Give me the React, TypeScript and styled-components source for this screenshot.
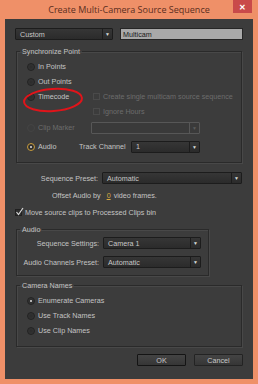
import styled, { createGlobalStyle } from "styled-components";

const GlobalStyle = createGlobalStyle`
  html, body {
    margin: 0;
    padding: 0;
    background: #ffffff;
  }
`;

export const Window = styled.div`
  display: flex;
  flex-direction: column;
  width: 258px;
  height: 384px;
  box-sizing: border-box;
  padding: 0 5px 5px 5px;
  background-color: #ef9068;
  font-family: "Liberation Sans", Arial, sans-serif;
`;

export const TitleBar = styled.div`
  display: flex;
  justify-content: center;
  align-items: center;
  position: relative;
  height: 19px;
  font-family: "Open Sans", sans-serif;
  font-size: 9px;
  color: #5a2e1e;
`;

export const CloseBtn = styled.div`
  position: absolute;
  top: 0;
  right: 1px;
  display: flex;
  justify-content: center;
  align-items: center;
  width: 19px;
  height: 13px;
  background-color: #c94a4a;
  color: #ffffff;
  font-size: 8px;
  font-weight: bold;
`;

export const Body = styled.div`
  display: flex;
  flex-direction: column;
  flex: 1;
  padding: 9px 10px 0 10px;
  background-color: #3c3c3c;
  color: #c4c4c4;
  font-size: 7.2px;
`;

export const Row = styled.div<{ $h?: number; $pl?: number; $mt?: number }>`
  display: flex;
  align-items: center;
  height: ${(p) => p.$h ?? 15}px;
  padding-left: ${(p) => p.$pl ?? 0}px;
  margin-top: ${(p) => p.$mt ?? 0}px;
  white-space: nowrap;
`;

export const Lead = styled.div<{ $w: number }>`
  display: flex;
  align-items: center;
  flex: 0 0 ${(p) => p.$w}px;
  width: ${(p) => p.$w}px;
`;

export const Select = styled.div<{ $w: number; $disabled?: boolean }>`
  display: flex;
  align-items: center;
  flex: 0 0 ${(p) => p.$w}px;
  box-sizing: border-box;
  width: ${(p) => p.$w}px;
  height: 12px;
  border: 1px solid ${(p) => (p.$disabled ? "#575757" : "#1c1c1c")};
  border-radius: 1px;
  background: ${(p) =>
    p.$disabled ? "#3a3a3a" : "linear-gradient(#363636, #2b2b2b)"};
  color: #c8c8c8;

  > .val {
    flex: 1;
    padding-left: 4px;
  }

  > .arrow {
    display: flex;
    justify-content: center;
    align-items: center;
    width: 9px;
    height: 100%;
    border-left: 1px solid ${(p) => (p.$disabled ? "#575757" : "#1c1c1c")};
    color: ${(p) => (p.$disabled ? "#5c5c5c" : "#d8d8d8")};
    font-size: 5px;
  }
`;

export const TextInput = styled.div`
  display: flex;
  align-items: center;
  box-sizing: border-box;
  flex: 1;
  height: 12px;
  margin-left: 7px;
  padding-left: 2px;
  border: 1px solid #262626;
  background-color: #a9a9a9;
  color: #1a1a1a;
`;

export const Group = styled.fieldset<{ $w: number; $mt: number; $pb: number }>`
  width: ${(p) => p.$w}px;
  box-sizing: border-box;
  margin: ${(p) => p.$mt}px 0 0 1px;
  padding: 0 0 ${(p) => p.$pb}px 0;
  border: 1px solid #2a2a2a;
  box-shadow: 1px 1px 0 #484848, inset 1px 1px 0 #484848;
  min-width: 0;

  > legend {
    margin-left: 3px;
    padding: 0 2px;
    line-height: 9px;
    color: #c4c4c4;
  }
`;

export const Radio = styled.span<{ $on?: boolean; $accent?: boolean; $disabled?: boolean }>`
  position: relative;
  display: inline-block;
  flex: 0 0 8px;
  box-sizing: border-box;
  width: 8px;
  height: 8px;
  margin-right: 3px;
  border-radius: 50%;
  border: 1px solid ${(p) => (p.$accent ? "#c69a3a" : p.$disabled ? "#444" : "#222")};
  background: ${(p) => (p.$disabled ? "#3c3c3c" : "radial-gradient(#2b2b2b, #363636)")};

  &::after {
    content: "";
    display: ${(p) => (p.$on ? "block" : "none")};
    position: absolute;
    left: 2px;
    top: 2px;
    width: 2px;
    height: 2px;
    border-radius: 50%;
    background: #e0e0e0;
  }
`;

export const Check = styled.span<{ $on?: boolean; $disabled?: boolean }>`
  position: relative;
  display: inline-block;
  flex: 0 0 7px;
  box-sizing: border-box;
  width: 7px;
  height: 7px;
  margin-right: 3px;
  border: 1px solid ${(p) => (p.$disabled ? "#4a4a4a" : "#202020")};
  background: ${(p) => (p.$disabled ? "#3c3c3c" : "#2e2e2e")};

  > svg {
    position: absolute;
    left: -1px;
    top: -3px;
  }
`;

export const Label = styled.span<{ $disabled?: boolean; $w?: number; $right?: boolean }>`
  display: inline-block;
  color: ${(p) => (p.$disabled ? "#6c6c6c" : "#c4c4c4")};
  ${(p) => (p.$w ? `flex: 0 0 ${p.$w}px; width: ${p.$w}px; box-sizing: border-box;` : "")}
  ${(p) => (p.$right ? "text-align: right; padding-right: 4px;" : "")}
`;

export const Underlined = styled.span`
  margin: 0 3px 0 6px;
  color: #d6a840;
  text-decoration: underline;
`;

export const Footer = styled.div`
  display: flex;
  justify-content: flex-end;
  column-gap: 8px;
  margin-top: 7px;
`;

export const Button = styled.div<{ $focus?: boolean }>`
  display: flex;
  justify-content: center;
  align-items: center;
  box-sizing: border-box;
  width: 49px;
  height: 12px;
  border: 1px solid ${(p) => (p.$focus ? "#141414" : "#232323")};
  border-radius: 1px;
  background: linear-gradient(#444, #363636);
  color: #c8c8c8;
`;

const Ring = styled.svg`
  position: absolute;
  left: 22px;
  top: 86px;
  pointer-events: none;
`;

function Arrow() {
  return <span className="arrow">▼</span>;
}

function CheckMark() {
  return (
    <svg width="9" height="9" viewBox="0 0 9 9">
      <path d="M1.5 5 L3.5 7.5 L8 1" fill="none" stroke="#d8d8d8" strokeWidth="1.2" />
    </svg>
  );
}

export default function App() {
  return (
    <>
      <GlobalStyle />
      <Window>
        <TitleBar>
          Create Multi-Camera Source Sequence
          <CloseBtn>✕</CloseBtn>
        </TitleBar>
        <Body>
          <Row $h={12}>
            <Select $w={98}>
              <span className="val">Custom</span>
              <Arrow />
            </Select>
            <TextInput>Multicam</TextInput>
          </Row>

          <Group $w={226} $mt={7} $pb={6}>
            <legend>Synchronize Point</legend>
            <Row $pl={10} $mt={3}>
              <Radio />
              <Label>In Points</Label>
            </Row>
            <Row $pl={10}>
              <Radio />
              <Label>Out Points</Label>
            </Row>
            <Row $pl={10}>
              <Lead $w={66}>
                <Radio />
                <Label>Timecode</Label>
              </Lead>
              <Check $disabled />
              <Label $disabled>Create single multicam source sequence</Label>
            </Row>
            <Row $h={14} $pl={76}>
              <Check $disabled />
              <Label $disabled>Ignore Hours</Label>
            </Row>
            <Row $h={19} $pl={10}>
              <Lead $w={64}>
                <Radio $disabled />
                <Label $disabled>Clip Marker</Label>
              </Lead>
              <Select $w={109} $disabled>
                <span className="val" />
                <Arrow />
              </Select>
            </Row>
            <Row $h={19} $pl={10}>
              <Lead $w={52}>
                <Radio $on $accent />
                <Label>Audio</Label>
              </Lead>
              <Label $w={52}>Track Channel</Label>
              <Select $w={69}>
                <span className="val">1</span>
                <Arrow />
              </Select>
            </Row>
          </Group>

          <Row $h={12} $mt={9}>
            <Label $w={87} $right>Sequence Preset:</Label>
            <Select $w={140}>
              <span className="val">Automatic</span>
              <Arrow />
            </Select>
          </Row>
          <Row $h={14} $mt={4} $pl={37}>
            <Label>Offset Audio by</Label>
            <Underlined>0</Underlined>
            <Label>video frames.</Label>
          </Row>
          <Row $h={14} $mt={3}>
            <Check $on>
              <CheckMark />
            </Check>
            <Label>Move source clips to Processed Clips bin</Label>
          </Row>

          <Group $w={193} $mt={6} $pb={6}>
            <legend>Audio</legend>
            <Row $h={14} $mt={2}>
              <Label $w={86} $right>Sequence Settings:</Label>
              <Select $w={98}>
                <span className="val">Camera 1</span>
                <Arrow />
              </Select>
            </Row>
            <Row $h={14} $mt={5}>
              <Label $w={86} $right>Audio Channels Preset:</Label>
              <Select $w={98}>
                <span className="val">Automatic</span>
                <Arrow />
              </Select>
            </Row>
          </Group>

          <Group $w={226} $mt={5} $pb={8}>
            <legend>Camera Names</legend>
            <Row $pl={10} $mt={3}>
              <Radio $on />
              <Label>Enumerate Cameras</Label>
            </Row>
            <Row $pl={10}>
              <Radio />
              <Label>Use Track Names</Label>
            </Row>
            <Row $pl={10}>
              <Radio />
              <Label>Use Clip Names</Label>
            </Row>
          </Group>

          <Footer>
            <Button $focus>OK</Button>
            <Button>Cancel</Button>
          </Footer>
        </Body>
      </Window>
      <Ring width="64" height="30" viewBox="0 0 64 30">
        <ellipse cx="31" cy="14" rx="29" ry="11" fill="none" stroke="#e0141a" strokeWidth="2" transform="rotate(-4 31 14)" />
      </Ring>
    </>
  );
}
